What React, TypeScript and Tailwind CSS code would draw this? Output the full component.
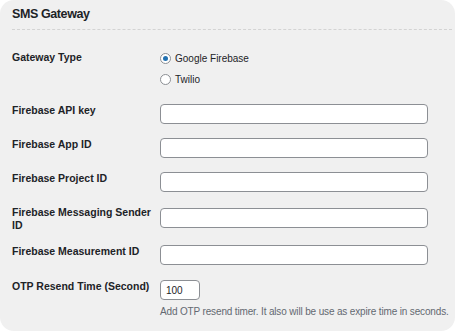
import React, { useState } from "react";

function Field({ label, mt = "mt-[14px]" }: { label: string; mt?: string }) {
  return (
    <div className={`flex items-start ${mt}`}>
      <label className="w-[148px] shrink-0 pr-2 text-[10.5px] font-bold leading-[13px] text-[#1d2327]">
        {label}
      </label>
      <input
        type="text"
        className="h-5 w-[268px] rounded-[4px] border border-[#8c8f94] bg-white px-1.5 text-[10px] outline-none"
      />
    </div>
  );
}

function Radio({ checked, label, onClick }: { checked: boolean; label: string; onClick: () => void }) {
  return (
    <button type="button" onClick={onClick} className="flex h-[13px] items-center gap-[4px] text-[10px] text-[#1d2327]">
      <span className="flex h-[11px] w-[11px] items-center justify-center rounded-full border border-[#8c8f94] bg-white">
        {checked && <span className="h-[5px] w-[5px] rounded-full bg-[#2271b1]" />}
      </span>
      {label}
    </button>
  );
}

export default function App() {
  const [gateway, setGateway] = useState("firebase");

  return (
    <div className="min-h-screen bg-white" style={{ fontFamily: '"Liberation Sans", Arial, sans-serif' }}>
      <div className="h-[331px] w-[455px] rounded-[14px] bg-[#f0f0f0] pl-3 pr-3">
        <div className="-mr-[9px] flex h-[30px] items-end border-b border-dashed border-[#d3d3d3] pb-[7px]">
          <h2 className="text-[12.5px] font-bold leading-[15px] tracking-[-0.4px] text-[#1d2327]">SMS Gateway</h2>
        </div>

        <div className="mt-[21px] flex items-start">
          <label className="w-[148px] shrink-0 text-[10.5px] font-bold leading-[13px] text-[#1d2327]">Gateway Type</label>
          <div className="flex flex-col gap-[8px] pt-[1px]">
            <Radio checked={gateway === "firebase"} label="Google Firebase" onClick={() => setGateway("firebase")} />
            <Radio checked={gateway === "twilio"} label="Twilio" onClick={() => setGateway("twilio")} />
          </div>
        </div>

        <Field label="Firebase API key" mt="mt-[18px]" />
        <Field label="Firebase App ID" />
        <Field label="Firebase Project ID" />
        <div className="mt-[14px] flex items-start">
          <label className="w-[148px] shrink-0 pr-2 text-[10.5px] font-bold leading-[13px] text-[#1d2327]">
            Firebase Messaging Sender ID
          </label>
          <input
            type="text"
            className="mt-[2px] h-5 w-[268px] rounded-[4px] border border-[#8c8f94] bg-white px-1.5 text-[10px] outline-none"
          />
        </div>
        <Field label="Firebase Measurement ID" mt="mt-[13px]" />

        <div className="mt-[15px] flex items-start">
          <label className="w-[148px] shrink-0 pr-2 text-[10.5px] font-bold leading-[13px] text-[#1d2327]">
            OTP Resend Time (Second)
          </label>
          <div className="flex flex-col">
            <input
              type="text"
              defaultValue="100"
              className="h-5 w-[40px] rounded-[4px] border border-[#8c8f94] bg-white px-[5px] text-[10px] text-[#1d2327] outline-none"
            />
            <p className="mt-[5px] whitespace-nowrap text-[10px] leading-[13px] tracking-[-0.15px] text-[#646970]">
              Add OTP resend timer. It also will be use as expire time in seconds.
            </p>
          </div>
        </div>
      </div>
    </div>
  );
}
